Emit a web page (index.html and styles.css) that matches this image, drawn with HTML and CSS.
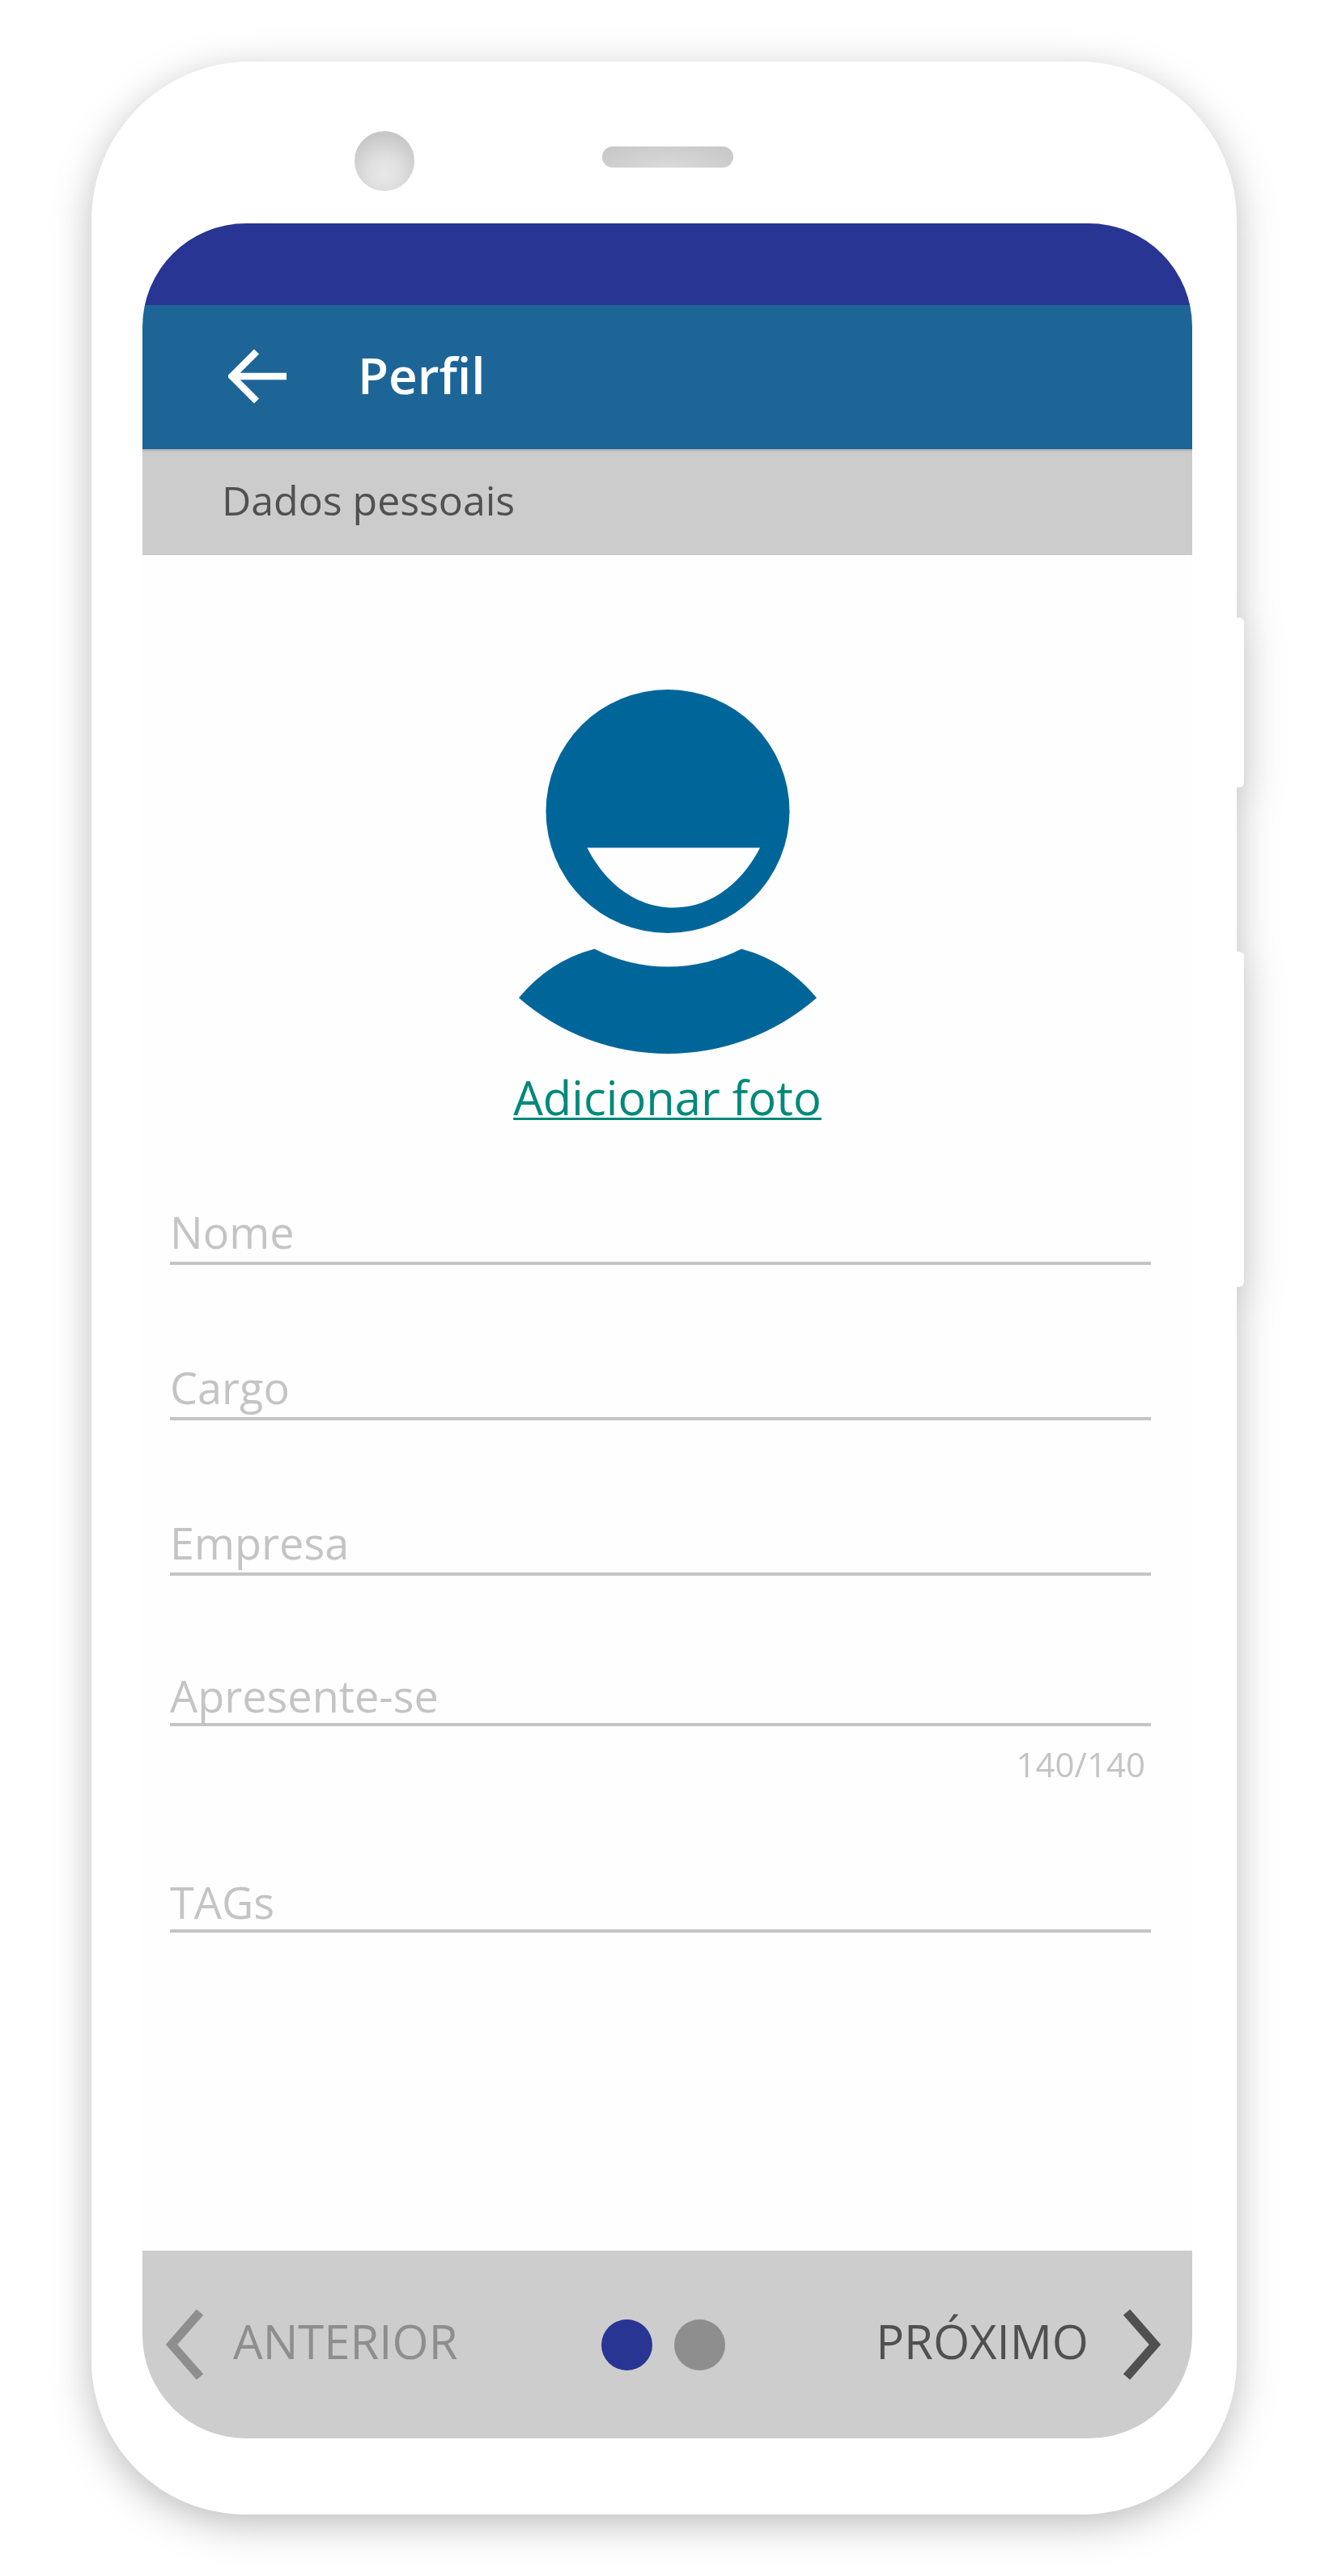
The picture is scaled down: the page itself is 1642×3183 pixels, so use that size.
FILE: index.html
```html
<!DOCTYPE html>
<html lang="pt-BR">
<head>
<meta charset="utf-8">
<meta name="viewport" content="width=device-width, initial-scale=1">
<title>Perfil</title>
<link rel="stylesheet" href="styles.css">
</head>
<body>
<div class="phone">
  <span class="side-key side-key--power"></span>
  <span class="side-key side-key--volume"></span>
  <div class="bezel">
    <span class="camera"></span>
    <span class="speaker"></span>
  </div>
  <div class="screen">
    <div class="status-bar"></div>
    <header class="app-bar">
      <button class="back" type="button" aria-label="Voltar">
        <svg width="72" height="68" viewBox="0 0 72 68" aria-hidden="true"><path d="M35 3.5 4.500 34 35 64.500M5 34H72" fill="none" stroke="#fff" stroke-width="8.500"/></svg>
      </button>
      <h1 class="title">Perfil</h1>
    </header>
    <h2 class="section">Dados pessoais</h2>
    <main class="content">
      <svg class="avatar" width="368" height="450" viewBox="640 852 368 450" aria-hidden="true">
        <circle cx="824" cy="1002.500" r="150.500"/>
        <path d="M640 1233Q678 1187 733.500 1172.500A198 198 0 0 0 915 1172.500Q970 1187 1008 1233A280 280 0 0 1 640 1233Z"/>
        <path class="smile" d="M724.500 1047.500H938C914 1094 875 1121.500 831 1121.500S748 1094 724.500 1047.500Z"/>
      </svg>
      <a class="add-photo" href="#foto">Adicionar foto</a>
      <form class="form">
        <div class="field">
          <label for="nome">Nome</label>
          <input id="nome" type="text">
        </div>
        <div class="field">
          <label for="cargo">Cargo</label>
          <input id="cargo" type="text">
        </div>
        <div class="field">
          <label for="empresa">Empresa</label>
          <input id="empresa" type="text">
        </div>
        <div>
          <div class="field field--tight">
            <label for="apresente">Apresente-se</label>
            <input id="apresente" type="text" maxlength="140">
          </div>
          <p class="counter">140/140</p>
        </div>
        <div class="field field--tight">
          <label for="tags">TAGs</label>
          <input id="tags" type="text">
        </div>
      </form>
    </main>
    <footer class="pager">
      <button class="step step--prev" type="button">
        <svg width="46" height="88" viewBox="0 0 46 88" aria-hidden="true"><path d="M42 4 7 44 42 84" fill="none" stroke="currentColor" stroke-width="11"/></svg>
        <span>ANTERIOR</span>
      </button>
      <div class="dots">
        <span class="dot dot--active"></span>
        <span class="dot"></span>
      </div>
      <button class="step step--next" type="button">
        <span>PRÓXIMO</span>
        <svg width="46" height="88" viewBox="0 0 46 88" aria-hidden="true"><path d="M4 4 39 44 4 84" fill="none" stroke="currentColor" stroke-width="11"/></svg>
      </button>
    </footer>
  </div>
</div>
</body>
</html>
```

FILE: styles.css
```css
*,
*::before,
*::after {
  box-sizing: border-box;
}

body {
  margin: 0;
  min-height: 100vh;
  display: flex;
  padding: 76px 114px 76px 113px;
  background: #fff;
  font-family: "Open Sans", "Noto Sans", sans-serif;
}

h1,
h2,
p {
  margin: 0;
}

button {
  padding: 0;
  border: 0;
  background: none;
  font: inherit;
  color: inherit;
}

svg {
  display: block;
}

.phone {
  position: relative;
  flex: 1;
  display: flex;
  flex-direction: column;
  padding: 0 55px 94px 63px;
  border-radius: 196px 196px 190px 190px;
  background: #fff;
  filter: drop-shadow(0 12px 24px rgba(0, 0, 0, 0.26));
}

/* Hardware keys on the right edge of the case */
.side-key {
  position: absolute;
  right: -9px;
  width: 18px;
  border-radius: 6px;
  background: #fff;
}

.side-key--power {
  top: 687px;
  height: 210px;
}

.side-key--volume {
  top: 1100px;
  height: 414px;
}

.bezel {
  display: grid;
  grid-template-columns: 1fr auto 1fr;
  align-items: center;
  height: 200px;
  padding-top: 46px;
}

.camera {
  justify-self: end;
  width: 74px;
  height: 74px;
  margin-right: 232px;
  border-radius: 50%;
  background: radial-gradient(circle at 50% 70%, #e8e8e8, #e0e0e0 30%, #c8c8c8 75%);
}

.speaker {
  width: 162px;
  height: 26px;
  margin-bottom: 10px;
  border-radius: 13px;
  background: radial-gradient(ellipse at 50% 100%, #dadada, #c6c6c6);
}

.screen {
  flex: 1;
  display: flex;
  flex-direction: column;
  overflow: hidden;
  border-radius: 128px;
  background: #fefefe;
}

.status-bar {
  height: 101px;
  background: #283593;
}

.app-bar {
  display: flex;
  align-items: center;
  gap: 88px;
  height: 178px;
  padding: 0 106px 3px;
  background: #1d6597;
  color: #fff;
}

.title {
  padding-bottom: 4px;
  font-size: 62px;
  font-weight: 600;
  line-height: 84px;
}

.section {
  padding: 29px 98px 34px;
  background: #ccc;
  box-shadow: inset 0 4px 3px -2px rgba(0, 0, 0, 0.15);
  color: #505050;
  font-size: 50px;
  font-weight: 400;
  line-height: 68px;
}

.content {
  flex: 1;
  display: flex;
  flex-direction: column;
  align-items: center;
  padding: 166px 51px 0 34px;
}

.avatar {
  margin-left: 17px;
  fill: #00669a;
}

.smile {
  fill: #fefefe;
}

.add-photo {
  margin: 15px 0 90px 17px;
  color: #00897b;
  font-size: 58px;
  line-height: 78px;
  text-decoration-thickness: 3px;
  text-underline-offset: 3px;
  text-decoration-skip-ink: none;
}

.form {
  align-self: stretch;
  display: flex;
  flex-direction: column;
  gap: 114px;
}

/* The label rests on the line, in the same cell as its input */
.field {
  display: grid;
  border-bottom: 4px solid #c4c4c4;
  color: #c4c4c4;
  font-size: 54px;
  line-height: 74px;
}

.field--tight {
  line-height: 68px;
}

.field label,
.field input {
  grid-area: 1 / 1;
}

.field input {
  align-self: end;
  width: 100%;
  height: 60px;
  min-width: 0;
  padding: 0;
  border: 0;
  outline: 0;
  background: none;
  font: inherit;
  color: #505050;
}

.counter {
  padding: 25px 7px 0 0;
  color: #c4c4c4;
  font-size: 42px;
  line-height: 44px;
  text-align: right;
}

.pager {
  display: grid;
  grid-template-columns: 1fr auto 1fr;
  align-items: center;
  height: 232px;
  padding: 0 39px 0 29px;
  background: #cdcdcd;
  font-size: 58px;
  line-height: 78px;
}

.step {
  display: flex;
  align-items: center;
}

.step span {
  padding-bottom: 8px;
}

.step--prev {
  gap: 37px;
  color: #8e8e8e;
}

.step--next {
  justify-self: end;
  gap: 43px;
  color: #505050;
}

.dots {
  display: flex;
  gap: 27px;
}

.dot {
  width: 63px;
  height: 63px;
  border-radius: 50%;
  background: #8e8e8e;
}

.dot--active {
  background: #283593;
}
```
